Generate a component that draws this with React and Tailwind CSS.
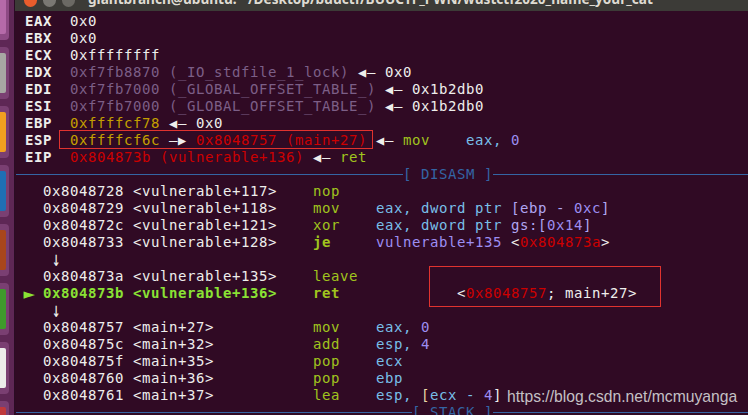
const W = 'text-[#eeeeec]'
const B = 'text-[#eeeeec] font-bold'
const P = 'text-[#7c5f87]'
const Y = 'text-[#c4a000]'
const R = 'text-[#cc0000]'
const G = 'text-[#8ae234] font-bold'
const M = 'text-[#a0c41e]'
const MB = 'text-[#a0c41e] font-bold'
const C = 'text-[#78bfe8]'
const V = 'text-[#9d8ef2]'
const L = 'text-[#b0a6f2]'
const K = 'text-[#ead9a6]'
// glyphs that need to be drawn a bit bigger than the font gives them
const TRI = 'inline-block scale-[1.5] text-[#eeeeec]'
const DOWN = 'inline-block scale-y-[1.5] text-[#eeeeec]'

const larr = [[' '], ['◂', TRI], ['— ']]
const rarr = [[' —'], ['▸', TRI], [' ']]

const regs = [
  [[' '], ['EAX', B], ['  0x0']],
  [[' '], ['EBX', B], ['  0x0']],
  [[' '], ['ECX', B], ['  0xffffffff']],
  [[' '], ['EDX', B], ['  '], ['0xf7fb8870 (_IO_stdfile_1_lock)', P], ...larr, ['0x0']],
  [[' '], ['EDI', B], ['  '], ['0xf7fb7000 (_GLOBAL_OFFSET_TABLE_)', P], ...larr, ['0x1b2db0']],
  [[' '], ['ESI', B], ['  '], ['0xf7fb7000 (_GLOBAL_OFFSET_TABLE_)', P], ...larr, ['0x1b2db0']],
  [[' '], ['EBP', B], ['  '], ['0xffffcf78', Y], ...larr, ['0x0']],
  [[' '], ['ESP', B], ['  '], ['0xffffcf6c', Y], ...rarr, ['0x8048757 (main+27)', R], ...larr, ['mov', M], ['    '], ['eax, ', C], ['0', V]],
  [[' '], ['EIP', B], ['  '], ['0x804873b (vulnerable+136)', R], ...larr, ['ret', M]],
]

const disasm = [
  [['   0x8048728 <vulnerable+117>    '], ['nop', M]],
  [['   0x8048729 <vulnerable+118>    '], ['mov', M], ['    '], ['eax, dword ptr ', C], ['[ebp - ', L], ['0xc', V], [']', L]],
  [['   0x804872c <vulnerable+121>    '], ['xor', M], ['    '], ['eax, dword ptr ', C], ['gs:[', L], ['0x14', V], [']', L]],
  [['   0x8048733 <vulnerable+128>    '], ['je', MB], ['     '], ['vulnerable+135', V], [' <'], ['0x804873a', R], ['>']],
  [['    '], ['↓', DOWN]],
  [['   0x804873a <vulnerable+135>    '], ['leave', M]],
  [[' '], ['►', 'inline-block scale-[1.35] text-[#8ae234]'], [' '], ['0x804873b <vulnerable+136>', G], ['    '], ['ret', MB], ['             <'], ['0x8048757', R], ['; main+27>']],
  [['    '], ['↓', DOWN]],
  [['   0x8048757 <main+27>           '], ['mov', M], ['    '], ['eax, ', C], ['0', V]],
  [['   0x804875c <main+32>           '], ['add', M], ['    '], ['esp, ', C], ['4', V]],
  [['   0x804875f <main+35>           '], ['pop', M], ['    '], ['ecx', C]],
  [['   0x8048760 <main+36>           '], ['pop', M], ['    '], ['ebp', C]],
  [['   0x8048761 <main+37>           '], ['lea', M], ['    '], ['esp, ', C], ['[', K], ['ecx - ', C], ['4', V], [']', W]],
]

const tiles = [
  { bg: 'bg-[#8d4a84]', inner: 'bg-[#b56aa9]' },
  { bg: 'bg-[#7a3f72]', inner: 'bg-[#a7a7a3]' },
  { bg: 'bg-[#7a3f72]', inner: 'bg-[#f0a020]' },
  { bg: 'bg-[#7a3f72]', inner: 'bg-[#1f6fb4]' },
  { bg: 'bg-[#7a3f72]', inner: 'bg-[#a8461c]' },
  { bg: 'bg-[#7a3f72]', inner: 'bg-[#3f9a2c]' },
  { bg: 'bg-[#7a3f72]', inner: 'bg-[#ececea]' },
  { bg: 'bg-[#7a3f72]', inner: 'bg-[#c0393b]' },
]

function Line({ segs }) {
  return (
    <div className="h-[17px] whitespace-pre leading-[17px]">
      {segs.map(([t, cls], i) => (
        <span key={i} className={cls || W}>{t}</span>
      ))}
    </div>
  )
}

function Separator({ label, left }) {
  return (
    <div className="flex h-[17px] items-center leading-[17px]">
      <div className={`h-px bg-[#3465a4] ${left}`} />
      <span className="whitespace-pre text-[#3465a4]">{label}</span>
      <div className="h-px flex-1 bg-[#3465a4]" />
    </div>
  )
}

export default function App() {
  return (
    <div className="flex h-[415px] w-[748px] overflow-hidden bg-[#300a24]">
      {/* launcher */}
      <div className="flex w-[15px] shrink-0 flex-col gap-[7px] border-r border-[#2a0c24] bg-[#5e2755]">
        {tiles.map((t, i) => (
          <div key={i} className={`flex h-[52px] w-[9px] shrink-0 items-center rounded-r-[4px] ${t.bg} ${i === 0 ? '-mt-[12px]' : ''}`}>
            <div className={`h-[40px] w-[6px] rounded-r-[2px] ${t.inner}`} />
          </div>
        ))}
      </div>

      <div className="flex min-w-0 flex-1 flex-col">
        {/* title bar */}
        <div className="relative flex h-[11px] shrink-0 overflow-hidden bg-[#3c3b37]">
          <div className="-mt-[6px] ml-[9px] h-[13px] w-[13px] rounded-full bg-[#e95c2c]" />
          <div className="-mt-[6px] ml-[6px] h-[13px] w-[13px] rounded-full bg-[#7a7873]" />
          <div className="-mt-[6px] ml-[6px] h-[13px] w-[13px] rounded-full bg-[#6b6964]" />
          <span className="-mt-[9px] ml-[13px] whitespace-pre font-['Noto_Sans',sans-serif] text-[13.6px] font-bold leading-[16px] text-[#dfdbd2]">
            giantbranch@ubuntu: ~/Desktop/buuctf/BUUCTF_PWN/wustctf2020_name_your_cat
          </span>
        </div>

        {/* terminal */}
        <div className="relative flex-1 pl-[1px] pt-[2px] font-['DejaVu_Sans_Mono',monospace] text-[14px] tracking-[0.57px]">
          {regs.map((s, i) => <Line key={i} segs={s} />)}
          <Separator label="[ DISASM ]" left="w-[387px]" />
          {disasm.map((s, i) => <Line key={i} segs={s} />)}
          <Separator label="[ STACK ]" left="w-[396px]" />

          <div className="absolute left-[44px] top-[119px] h-[19px] w-[314px] border border-[#e0332f]" />
          <div className="absolute left-[414px] top-[255px] h-[41px] w-[232px] border border-[#e0332f]" />
          <div className="absolute left-[492px] top-[377px] whitespace-pre font-['Liberation_Sans',sans-serif] text-[15.7px] leading-[17px] tracking-normal text-[#c4c0c4]">
            https://blog.csdn.net/mcmuyanga
          </div>
        </div>
      </div>
    </div>
  )
}
